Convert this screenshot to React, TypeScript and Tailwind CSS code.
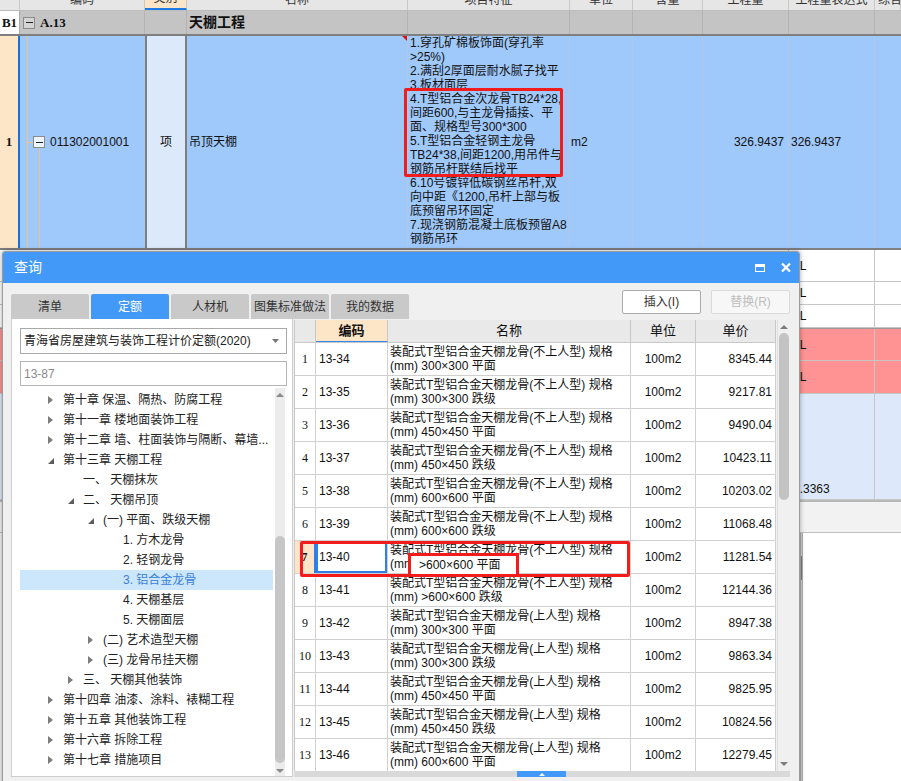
import clsx from 'clsx';

const SHEET_GRID = 'grid grid-cols-[20px_125px_42px_221px_162px_63px_70px_86px_86px_26px]';
const TABLE_GRID = 'grid grid-cols-[21px_72px_243px_65px_80px]';

const SHEET_HEAD = ['', '编码', '类别', '名称', '项目特征', '单位', '含量', '工程量', '工程量表达式', '综合单价'];

const FEATURES = [
  '1.穿孔矿棉板饰面(穿孔率',
  '>25%)',
  '2.满刮2厚面层耐水腻子找平',
  '3.板材面层',
  '4.T型铝合金次龙骨TB24*28,',
  '间距600,与主龙骨插接、平',
  '面、规格型号300*300',
  '5.T型铝合金轻钢主龙骨',
  'TB24*38,间距1200,用吊件与',
  '钢筋吊杆联结后找平',
  '6.10号镀锌低碳钢丝吊杆,双',
  '向中距《1200,吊杆上部与板',
  '底预留吊环固定',
  '7.现浇钢筋混凝土底板预留A8',
  '钢筋吊环',
];

const LOWER_ROWS = [
  { h: 'h-[32px]', bg: 'bg-white', text: '0L', bottom: false },
  { h: 'h-[23px]', bg: 'bg-white', text: '0L', bottom: false },
  { h: 'h-[23px]', bg: 'bg-white', text: '0L', bottom: false },
  { h: 'h-[33px]', bg: 'bg-[#ff9393]', text: '0L', bottom: false },
  { h: 'h-[33px]', bg: 'bg-[#ff9393]', text: '0L', bottom: false },
  { h: 'h-[106px]', bg: 'bg-[#dde9fb]', text: '2.3363', bottom: true },
];

type TreeNode = { label: string; level: number; arrow?: 'open' | 'closed'; selected?: boolean };

const TREE: TreeNode[] = [
  { label: '第十章 保温、隔热、防腐工程', level: 1, arrow: 'closed' },
  { label: '第十一章 楼地面装饰工程', level: 1, arrow: 'closed' },
  { label: '第十二章 墙、柱面装饰与隔断、幕墙...', level: 1, arrow: 'closed' },
  { label: '第十三章 天棚工程', level: 1, arrow: 'open' },
  { label: '一、 天棚抹灰', level: 2 },
  { label: '二、 天棚吊顶', level: 2, arrow: 'open' },
  { label: '(一) 平面、跌级天棚', level: 3, arrow: 'open' },
  { label: '1. 方木龙骨', level: 4 },
  { label: '2. 轻钢龙骨', level: 4 },
  { label: '3. 铝合金龙骨', level: 4, selected: true },
  { label: '4. 天棚基层', level: 4 },
  { label: '5. 天棚面层', level: 4 },
  { label: '(二) 艺术造型天棚', level: 3, arrow: 'closed' },
  { label: '(三) 龙骨吊挂天棚', level: 3, arrow: 'closed' },
  { label: '三、 天棚其他装饰', level: 2, arrow: 'closed' },
  { label: '第十四章 油漆、涂料、裱糊工程', level: 1, arrow: 'closed' },
  { label: '第十五章 其他装饰工程', level: 1, arrow: 'closed' },
  { label: '第十六章 拆除工程', level: 1, arrow: 'closed' },
  { label: '第十七章 措施项目', level: 1, arrow: 'closed' },
];

const LEVEL_PAD: Record<number, string> = {
  1: 'pl-[28px]',
  2: 'pl-[48px]',
  3: 'pl-[68px]',
  4: 'pl-[88px]',
};

const QUOTAS = [
  { no: 1, code: '13-34', kind: '不上人型', spec: '300×300 平面', price: '8345.44' },
  { no: 2, code: '13-35', kind: '不上人型', spec: '300×300 跌级', price: '9217.81' },
  { no: 3, code: '13-36', kind: '不上人型', spec: '450×450 平面', price: '9490.04' },
  { no: 4, code: '13-37', kind: '不上人型', spec: '450×450 跌级', price: '10423.11' },
  { no: 5, code: '13-38', kind: '不上人型', spec: '600×600 平面', price: '10203.02' },
  { no: 6, code: '13-39', kind: '不上人型', spec: '600×600 跌级', price: '11068.48' },
  { no: 7, code: '13-40', kind: '不上人型', spec: '', price: '11281.54' },
  { no: 8, code: '13-41', kind: '不上人型', spec: '>600×600 跌级', price: '12144.36' },
  { no: 9, code: '13-42', kind: '上人型', spec: '300×300 平面', price: '8947.38' },
  { no: 10, code: '13-43', kind: '上人型', spec: '300×300 跌级', price: '9863.34' },
  { no: 11, code: '13-44', kind: '上人型', spec: '450×450 平面', price: '9825.95' },
  { no: 12, code: '13-45', kind: '上人型', spec: '450×450 跌级', price: '10824.56' },
  { no: 13, code: '13-46', kind: '上人型', spec: '600×600 平面', price: '12279.45' },
];

function MinusBox({ fill }: { fill: string }) {
  return (
    <div className={clsx('w-[12px] h-[12px] shrink-0 border border-[#8a8a8a] flex items-center justify-center', fill)}>
      <div className="w-[7px] h-px bg-[#222]" />
    </div>
  );
}

function TreeArrow({ open }: { open: boolean }) {
  return open ? (
    <svg width="6" height="6" viewBox="0 0 6 6" className="mt-[2px]">
      <path d="M6 0V6H0Z" fill="#5c5c5c" />
    </svg>
  ) : (
    <svg width="5" height="8" viewBox="0 0 5 8">
      <path d="M0 0L5 4L0 8Z" fill="#7c7c7c" />
    </svg>
  );
}

function Sheet() {
  return (
    <div className="flex flex-col text-[12px] text-[#111]">
      {/* column header, cut off by the top of the window */}
      <div className={`${SHEET_GRID} h-[24px] -mt-[13px] bg-[#e6e6e6] border-b border-[#bcbcbc] text-[#333]`}>
        {SHEET_HEAD.map((h, i) => (
          <div
            key={i}
            className={clsx(
              'flex items-end pb-[3px] leading-[14px] border-r border-[#c8c8c8] overflow-hidden whitespace-nowrap',
              i === 9 ? 'justify-start pl-[3px]' : 'justify-center',
              i === 2 && 'bg-[#fde6c8] border-b-2 border-b-[#1e7be6]',
            )}
          >
            {h}
          </div>
        ))}
      </div>

      {/* B1 */}
      <div className={`${SHEET_GRID} h-[23px] bg-[#c4c4c4]`}>
        <div className="flex items-center justify-center bg-white border-r border-[#a9a9a9] font-['Liberation_Serif',serif] font-bold text-[13px]">
          B1
        </div>
        <div className="flex items-center pl-[3px] border-r border-[#b3b3b3]">
          <MinusBox fill="bg-[#d4d4d4]" />
          <span className="ml-[5px] font-['Liberation_Serif',serif] font-bold text-[13px]">A.13</span>
        </div>
        <div className="border-r border-[#b3b3b3]" />
        <div className="flex items-center pl-[2px] border-r border-[#b3b3b3] font-bold text-[14px]">天棚工程</div>
        <div className="border-r border-[#b3b3b3]" />
        <div className="border-r border-[#b3b3b3]" />
        <div className="border-r border-[#b3b3b3]" />
        <div className="border-r border-[#b3b3b3]" />
        <div className="border-r border-[#b3b3b3]" />
        <div />
      </div>

      {/* row 1 */}
      <div className={`${SHEET_GRID} h-[216px] border-y-2 border-[#7f7f7f] bg-[#9fc8fb]`}>
        <div className="flex items-center justify-center bg-[#fde6c8] border-r-2 border-[#1a6fe0] font-['Liberation_Serif',serif] font-bold text-[13px]">
          1
        </div>
        <div className="flex">
          <div className="ml-[7px] w-px bg-[#f3c27e]" />
          <div className="flex items-center">
            <div className="w-[5px] h-px bg-[#f3c27e]" />
            <div className="flex flex-col self-stretch">
              <div className="flex-1" />
              <MinusBox fill="bg-[#eef5ff]" />
              <div className="flex-1 flex justify-center">
                <div className="w-px bg-[#f3c27e]" />
              </div>
            </div>
            <span className="ml-[5px] whitespace-nowrap">011302001001</span>
          </div>
        </div>
        <div className="flex items-center justify-center bg-[#dce9fb] border-x-2 border-[#7f7f7f]">项</div>
        <div className="relative flex items-center pl-[2px] border-r border-[#b4c8e2]">
          吊顶天棚
          <div className="absolute top-0 right-0 w-0 h-0 border-t-[5px] border-l-[5px] border-t-[#e01010] border-l-transparent" />
        </div>
        <div className="pl-[2px] leading-[14px] border-r border-[#b4c8e2] overflow-hidden">
          {FEATURES.map((l, i) => (
            <div key={i} className="whitespace-nowrap">
              {l}
            </div>
          ))}
        </div>
        <div className="flex items-center pl-[1px] border-r border-[#b4c8e2]">m2</div>
        <div className="border-r border-[#b4c8e2]" />
        <div className="flex items-center justify-end pr-[4px] border-r border-[#b4c8e2]">326.9437</div>
        <div className="flex items-center pl-[2px] border-r border-[#b4c8e2]">326.9437</div>
        <div />
      </div>

      {/* rows hidden behind the dialog */}
      {LOWER_ROWS.map((r, i) => (
        <div key={i} className={clsx(SHEET_GRID, r.h, r.bg, 'border-b border-[#c6c6c6]', i === 3 && 'border-t border-t-[#9a9a9a]')}>
          <div className="border-r border-[#c6c6c6] col-span-8" />
          <div
            className={clsx(
              'flex pl-[4px] border-r border-[#c6c6c6]',
              r.bottom ? 'items-end pb-[1px]' : 'items-center',
            )}
          >
            {r.text}
          </div>
          <div />
        </div>
      ))}
      <div className="h-[32px] bg-[#f2f2f2] border-t-2 border-[#b8b8b8]" />
      <div className="flex h-[260px] border-t border-[#c0c0c0]">
        <div className="w-[800px] bg-[#f2f2f2]" />
        <div className="w-[3px] flex flex-col bg-[#d0d0d0] border-x border-[#b0b0b0]">
          <div className="mt-[23px] h-[24px] bg-[#7a7a7a]" />
        </div>
        <div className="flex-1 bg-white" />
      </div>
    </div>
  );
}

function Dialog() {
  return (
    <div className="absolute left-[2px] top-[251px] w-[798px] h-[540px] flex flex-col rounded-t-[3px] border border-[#9c9c9c] bg-[#f0f0f0] shadow-[0_0_5px_rgba(0,0,0,0.35)]">
      <div className="h-[31px] shrink-0 flex items-center bg-[#4299f8] pl-[11px] pr-[8px] rounded-t-[2px]">
        <span className="text-[14px] text-white">查询</span>
        <div className="ml-auto flex items-center gap-[16px]">
          <div className="w-[10px] h-[8px] border-[1.5px] border-t-[3px] border-white" />
          <svg width="10" height="9" viewBox="0 0 10 9">
            <path d="M1 0.5L9 8.5M9 0.5L1 8.5" stroke="white" strokeWidth="2.2" />
          </svg>
        </div>
      </div>

      <div className="flex items-start h-[29px] mt-[7px] pl-[8px] pr-[9px] shrink-0">
        <div className="mt-[4px] flex gap-[2px] text-[12px]">
          {['清单', '定额', '人材机', '图集标准做法', '我的数据'].map((t) => (
            <div
              key={t}
              className={clsx(
                'w-[78px] h-[25px] flex items-center justify-center rounded-t-[2px] whitespace-nowrap',
                t === '定额' ? 'bg-[#4299f8] text-white' : 'bg-[#c9c9c9] text-[#333]',
              )}
            >
              {t}
            </div>
          ))}
        </div>
        <div className="ml-auto flex gap-[10px] text-[12px]">
          <div className="w-[79px] h-[24px] flex items-center justify-center rounded-[2px] border border-[#aaaaaa] bg-white text-[#333]">
            插入(I)
          </div>
          <div className="w-[79px] h-[24px] flex items-center justify-center rounded-[2px] border border-[#dadada] bg-[#f7f7f7] text-[#bdbdbd]">
            替换(R)
          </div>
        </div>
      </div>

      <div className="flex pl-[8px]">
        {/* left: library + tree */}
        <div className="w-[282px] h-[458px] flex flex-col bg-white border-x border-b border-[#cdcdcd] pl-[8px] pt-[9px] text-[12px] text-[#222]">
          <div className="w-[267px] h-[26px] shrink-0 flex items-center border border-[#a9a9a9] pl-[3px] pr-[7px] whitespace-nowrap">
            青海省房屋建筑与装饰工程计价定额(2020)
            <svg className="ml-auto" width="7" height="4" viewBox="0 0 7 4">
              <path d="M0 0H7L3.5 4Z" fill="#777" />
            </svg>
          </div>
          <div className="w-[267px] h-[25px] shrink-0 mt-[7px] flex items-center border border-[#b4b4b4] pl-[3px] text-[#8a8a8a]">
            13-87
          </div>
          <div className="flex flex-1 mt-[2px]">
            <div className="w-[253px] pt-[2px]">
              {TREE.map((n) => (
                <div
                  key={n.label}
                  className={clsx(
                    'h-[20px] flex items-center whitespace-nowrap',
                    LEVEL_PAD[n.level],
                    n.selected && 'bg-[#cce6fb] text-[#3a7fd8]',
                  )}
                >
                  <div className="w-[15px] flex items-center">{n.arrow && <TreeArrow open={n.arrow === 'open'} />}</div>
                  {n.label}
                </div>
              ))}
            </div>
            <div className="ml-[2px] w-[10px] flex flex-col items-center bg-[#ececec]">
              <svg className="mt-[5px]" width="8" height="4" viewBox="0 0 8 4">
                <path d="M0 4L4 0L8 4Z" fill="#8a8a8a" />
              </svg>
              <div className="mt-[139px] w-[10px] h-[227px] rounded-[5px] bg-[#c6c6c6]" />
              <div className="flex-1" />
              <svg className="mb-[3px]" width="8" height="4" viewBox="0 0 8 4">
                <path d="M0 0L4 4L8 0Z" fill="#8a8a8a" />
              </svg>
            </div>
          </div>
        </div>

        {/* right: quota table */}
        <div className="ml-[1px] mt-[1px] w-[496px] h-[457px] flex flex-col">
          <div className="flex h-[451px]">
            <div className="w-[482px] overflow-hidden bg-white border-l border-[#c8c8c8] text-[12px] text-[#111]">
              <div className={`${TABLE_GRID} h-[23px] bg-[#e9e9e9] border-b border-[#c8c8c8]`}>
                <div className="border-r border-[#c8c8c8]" />
                <div className="flex items-center justify-center font-bold text-[13px] bg-[#fde6c8] border-r border-[#c8c8c8] border-b border-b-[#3a86e6]">
                  编码
                </div>
                <div className="flex items-center justify-center border-r border-[#c8c8c8] text-[13px]">名称</div>
                <div className="flex items-center justify-center border-r border-[#c8c8c8] text-[13px]">单位</div>
                <div className="flex items-center justify-center border-r border-[#c8c8c8] text-[13px]">单价</div>
              </div>
              {QUOTAS.map((q) => {
                const current = q.no === 7;
                return (
                  <div key={q.code} className={`${TABLE_GRID} h-[33px] border-b border-[#d0d0d0]`}>
                    <div
                      className={clsx(
                        "flex items-center justify-center font-['Liberation_Serif',serif]",
                        current ? 'bg-[#fde6c8] font-bold border-r-2 border-[#2f7fe6]' : 'border-r border-[#d0d0d0]',
                      )}
                    >
                      {q.no}
                    </div>
                    <div
                      className={clsx(
                        'flex items-center pl-[3px] border-r border-[#d0d0d0]',
                        current && 'shadow-[inset_0_0_0_2px_#2f7fe6]',
                      )}
                    >
                      {q.code}
                    </div>
                    <div className="pl-[2px] pt-[2px] leading-[14px] border-r border-[#d0d0d0] whitespace-nowrap">
                      <div>装配式T型铝合金天棚龙骨({q.kind}) 规格</div>
                      <div>{current ? '(mm' : `(mm) ${q.spec}`}</div>
                    </div>
                    <div className="flex items-center justify-center border-r border-[#d0d0d0]">100m2</div>
                    <div className="flex items-center justify-end pr-[3px] border-r border-[#d0d0d0]">{q.price}</div>
                  </div>
                );
              })}
            </div>
            <div className="ml-[1px] w-[13px] flex flex-col items-center bg-[#f0f0f0] border-l border-[#e0e0e0]">
              <svg className="mt-[5px]" width="8" height="4" viewBox="0 0 8 4">
                <path d="M0 4L4 0L8 4Z" fill="#7d7d7d" />
              </svg>
              <div className="mt-[4px] w-[10px] h-[167px] rounded-[5px] bg-[#c3c3c3]" />
              <div className="flex-1" />
              <svg className="mb-[5px]" width="8" height="4" viewBox="0 0 8 4">
                <path d="M0 0L4 4L8 0Z" fill="#7d7d7d" />
              </svg>
            </div>
          </div>
          <div className="h-[6px] flex bg-[#d9d9d9]">
            <div className="ml-[223px] w-[49px] flex items-center justify-center bg-[#4299f8]">
              <svg width="6" height="3" viewBox="0 0 6 3">
                <path d="M0 3L3 0L6 3Z" fill="white" />
              </svg>
            </div>
          </div>
        </div>
      </div>
    </div>
  );
}

export default function App() {
  return (
    <div className="relative w-[901px] h-[781px] overflow-hidden bg-white font-['Liberation_Sans','Noto_Sans_CJK_SC',sans-serif]">
      <Sheet />
      <Dialog />

      {/* red annotation boxes drawn over the screenshot */}
      <div className="absolute left-[404px] top-[88px] w-[159px] h-[89px] border-[3px] border-[#f21c1c] rounded-[2px]" />
      <div className="absolute left-[300px] top-[541px] w-[330px] h-[36px] border-[3px] border-[#f21c1c] rounded-[2px]" />
      <div className="absolute left-[408px] top-[553px] w-[111px] h-[24px] flex items-center pl-[8px] border-[3px] border-[#f21c1c] bg-white text-[12px] text-[#111] whitespace-nowrap">
        &gt;600×600 平面
      </div>
    </div>
  );
}
